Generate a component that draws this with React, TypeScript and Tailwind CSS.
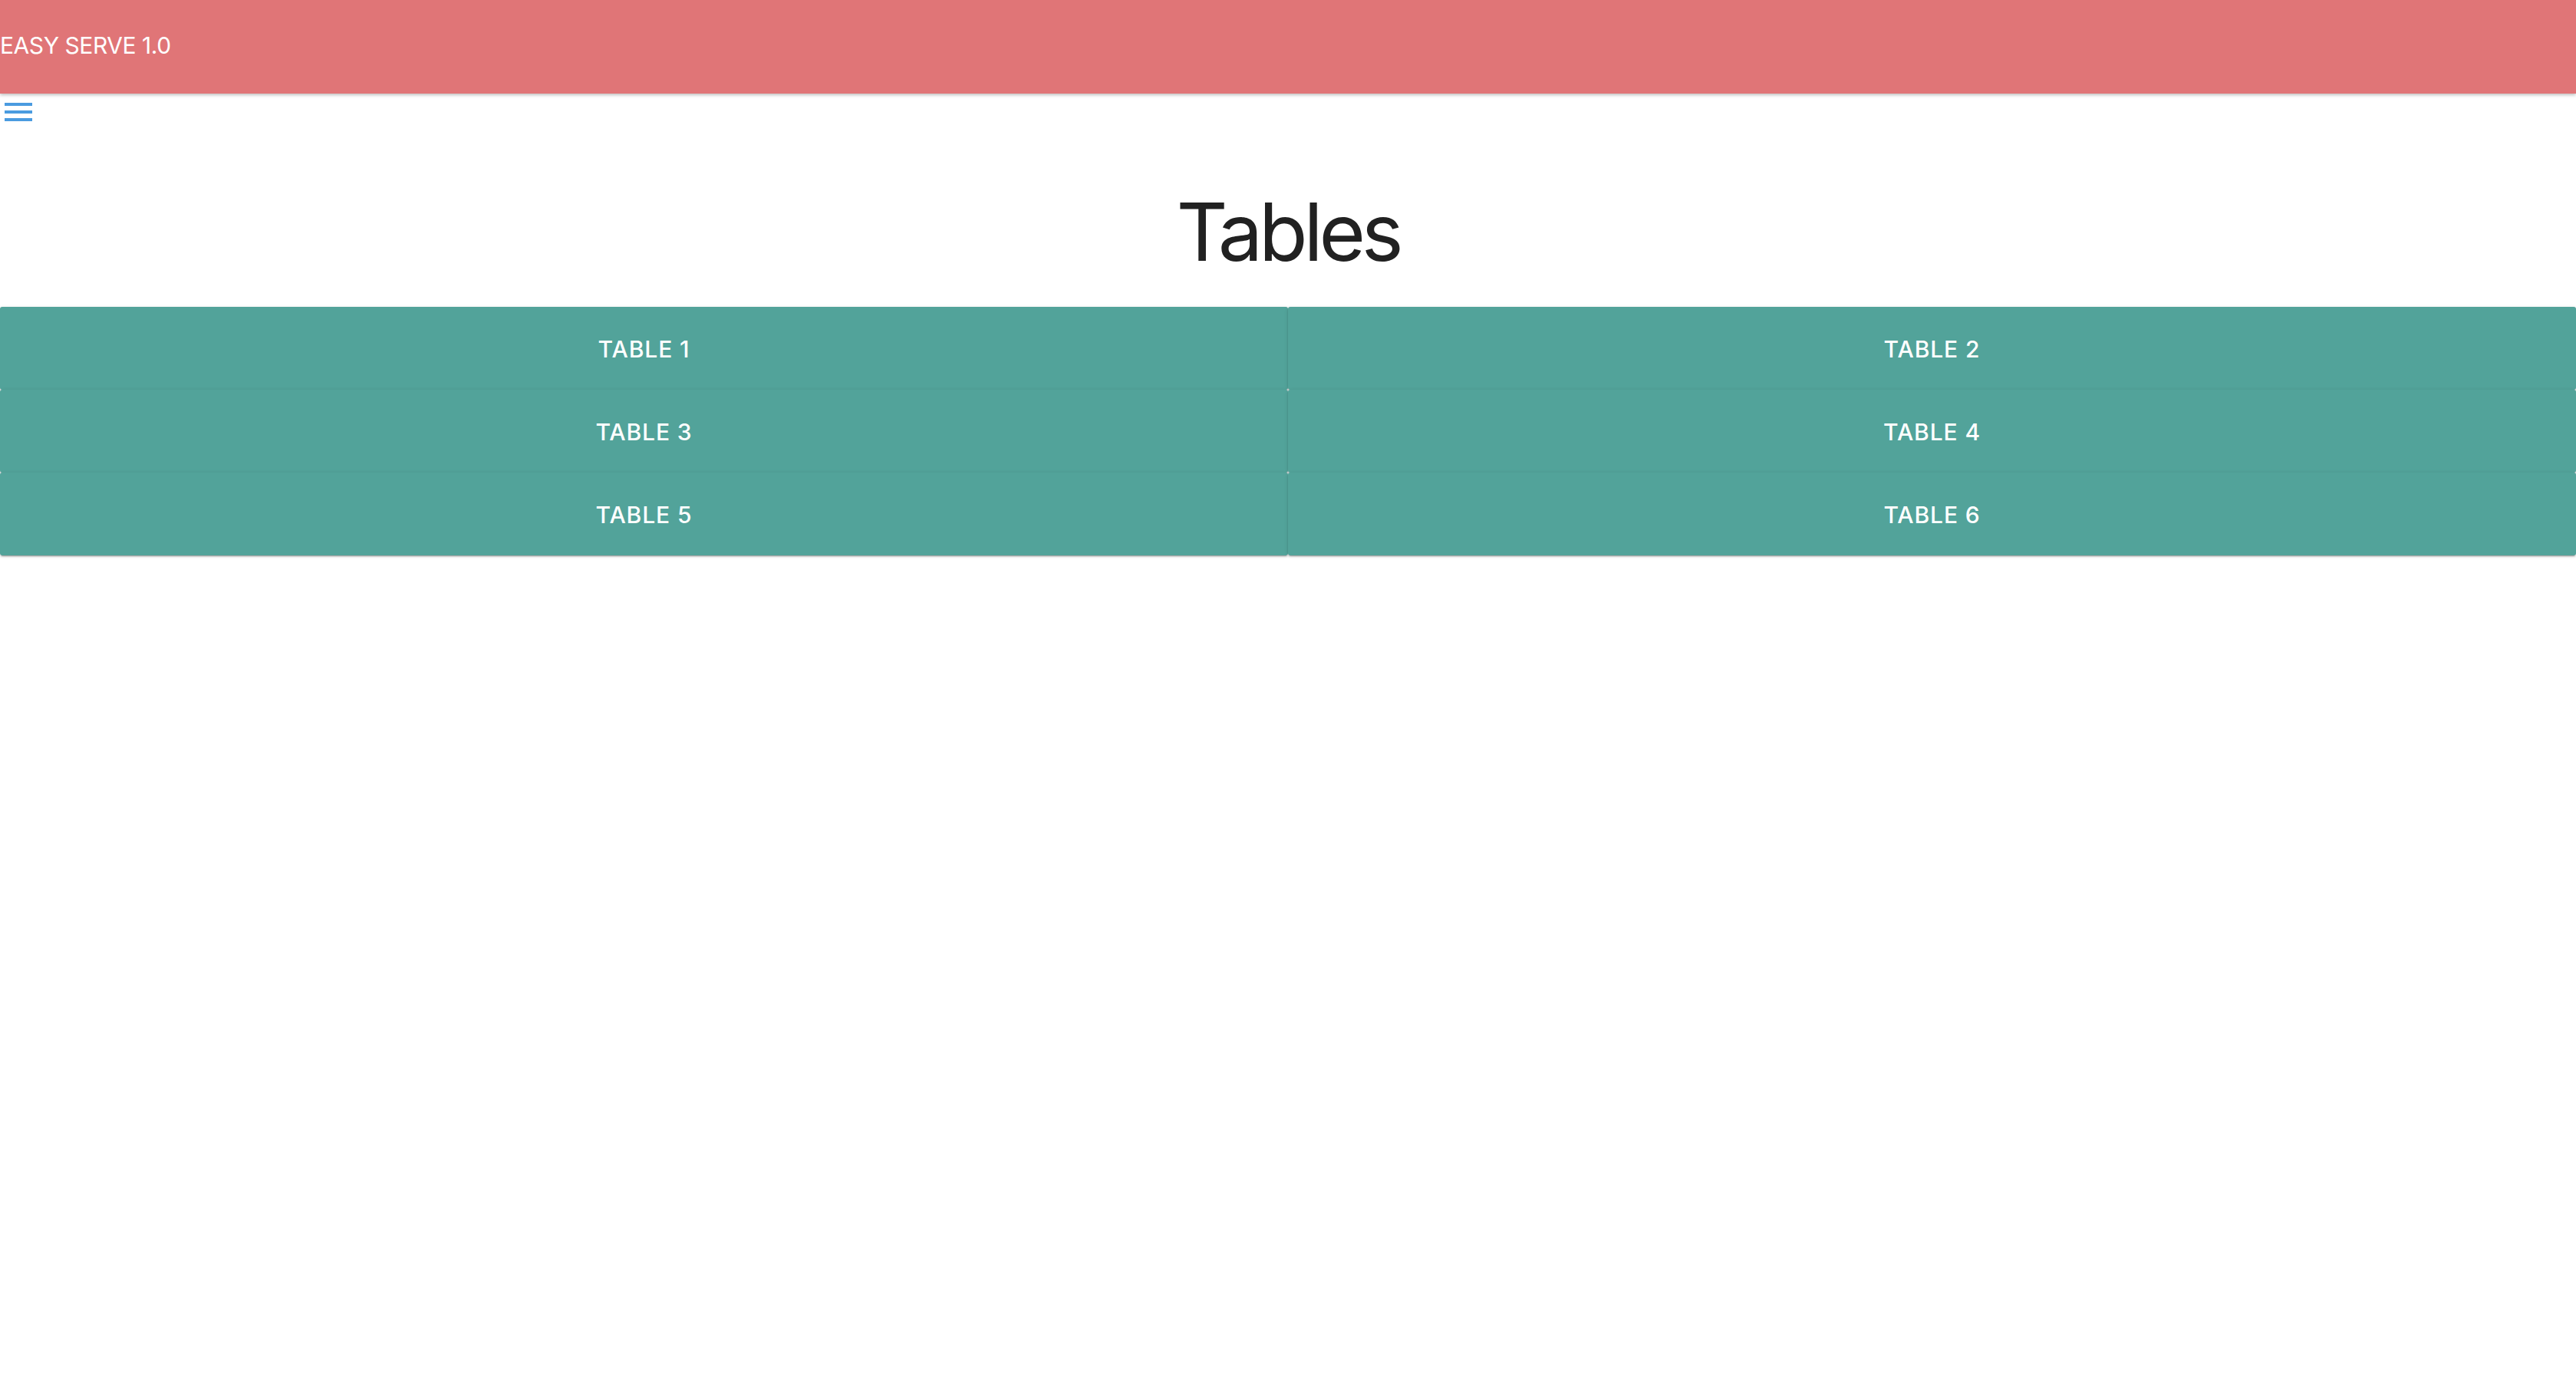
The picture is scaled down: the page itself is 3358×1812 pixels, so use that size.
const TABLES = ['Table 1', 'Table 2', 'Table 3', 'Table 4', 'Table 5', 'Table 6']

function MenuIcon() {
  return (
    <svg width="36" height="24" viewBox="0 0 36 24" className="block">
      <rect x="0" y="0" width="36" height="4" fill="#4a9be0" />
      <rect x="0" y="10" width="36" height="4" fill="#4a9be0" />
      <rect x="0" y="20" width="36" height="4" fill="#4a9be0" />
    </svg>
  )
}

export default function App() {
  return (
    <main className="min-h-screen bg-white" style={{ fontFamily: 'Inter, "Noto Sans", sans-serif' }}>
      <header className="flex h-[122px] items-center bg-[#e07577] shadow-[0_2px_4px_rgba(0,0,0,0.25)]">
        <span className="mb-[4px] text-[30px] leading-none tracking-[-0.015em] text-white">EASY SERVE 1.0</span>
      </header>

      <button type="button" className="ml-[6px] mt-[12px] block">
        <MenuIcon />
      </button>

      <h1 className="mt-[92px] text-center text-[104px] font-normal leading-none tracking-[-0.05em] text-[#212121]">Tables</h1>

      <div className="mt-[46px] grid grid-cols-2">
        {TABLES.map((name) => (
          <button
            key={name}
            type="button"
            className="h-[108px] rounded-[3px] bg-[#52a39a] pt-[2px] text-[30px] font-medium uppercase tracking-[0.03em] text-white shadow-[0_3px_1px_-2px_rgba(0,0,0,0.2),0_2px_2px_0_rgba(0,0,0,0.14),0_1px_5px_0_rgba(0,0,0,0.12)]"
          >
            {name}
          </button>
        ))}
      </div>
    </main>
  )
}
